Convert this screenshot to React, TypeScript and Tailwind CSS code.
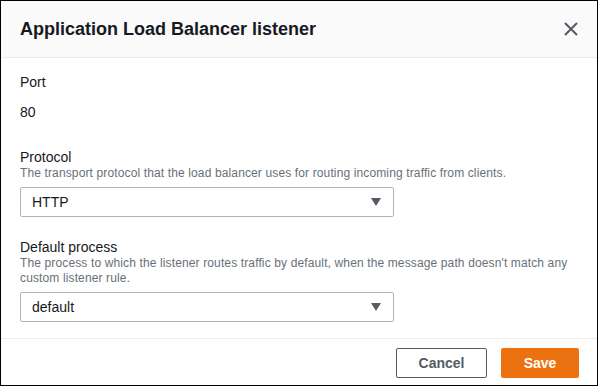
import React from 'react';

const font = { fontFamily: '"Liberation Sans", Arial, sans-serif' };

const Caret: React.FC = () => (
    <svg width="10" height="8" viewBox="0 0 10 8" className="shrink-0">
        <polygon points="0,0 10,0 5,8" fill="#545b64" />
    </svg>
);

const SelectBox: React.FC<{ value: string }> = ({ value }) => (
    <div className="mt-[6px] flex h-[30px] w-[374px] items-center justify-between rounded-[2px] border border-[#aab7b8] bg-white pl-[11px] pr-[12px]">
        <span className="text-[14px] text-[#16191f]">{value}</span>
        <Caret />
    </div>
);

const App: React.FC = () => {
    return (
        <div className="h-[387px] w-[599px] bg-white" style={font}>
            <div className="flex h-[386px] w-[598px] flex-col border border-black">
                {/* Header */}
                <header className="flex h-[57px] shrink-0 items-center justify-between border-b border-[#eaeded] bg-[#fafafa] pl-[19px] pr-[19px]">
                    <h1 className="text-[18px] font-bold leading-[22px] text-[#16191f]">
                        Application Load Balancer listener
                    </h1>
                    <button className="flex h-[14px] w-[14px] items-center justify-center" title="Close">
                        <svg width="14" height="14" viewBox="0 0 14 14">
                            <path d="M1 1 L13 13 M13 1 L1 13" stroke="#545b64" strokeWidth="2" fill="none" />
                        </svg>
                    </button>
                </header>

                {/* Body */}
                <div className="flex-1 px-[19px] pt-[15px] text-[#16191f]">
                    <div className="text-[14px] leading-[18px]">Port</div>
                    <div className="mt-[12px] text-[14px] leading-[18px]">80</div>

                    <div className="mt-[27px] text-[14px] leading-[18px]">Protocol</div>
                    <p className="text-[12px] leading-[15px] tracking-[0.13px] text-[#687078]">
                        The transport protocol that the load balancer uses for routing incoming traffic from clients.
                    </p>
                    <SelectBox value="HTTP" />

                    <div className="mt-[21px] text-[14px] leading-[18px]">Default process</div>
                    <p className="text-[12px] leading-[15px] tracking-[0.13px] text-[#687078]">
                        The process to which the listener routes traffic by default, when the message path doesn't match any custom listener rule.
                    </p>
                    <SelectBox value="default" />
                </div>

                {/* Footer */}
                <footer className="flex h-[47px] shrink-0 items-start justify-end gap-[14px] border-t border-[#eaeded] pr-[18px] pt-[9px]">
                    <button className="h-[30px] w-[91px] rounded-[2px] border border-[#545b64] bg-white text-[14px] font-bold text-[#545b64]">
                        Cancel
                    </button>
                    <button className="h-[30px] w-[78px] rounded-[2px] bg-[#ec7211] text-[14px] font-bold text-white">
                        Save
                    </button>
                </footer>
            </div>
        </div>
    );
};

export default App;
